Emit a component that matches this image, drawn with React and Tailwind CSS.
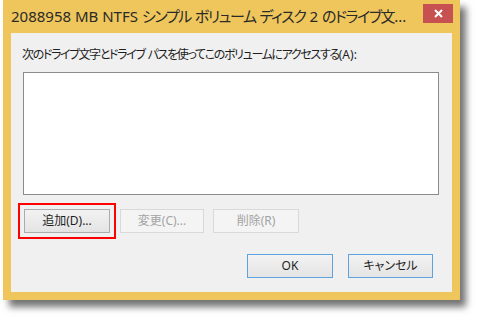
import React from "react";

const jp = "font-['Noto_Sans','Noto_Sans_CJK_JP',sans-serif] [font-feature-settings:'palt']";

const Btn = ({ children, disabled, primary, className = "" }) => (
  <div
    className={`h-[24px] flex items-center justify-center text-[12px] border ${
      disabled
        ? "border-[#d9d9d9] bg-[#f4f4f4] text-[#a3a3a3]"
        : primary
        ? "border-[#5fa2e0] bg-gradient-to-b from-[#f2f2f2] to-[#e4e4e4] text-[#1e1e1e]"
        : "border-[#acacac] bg-gradient-to-b from-[#f2f2f2] to-[#e4e4e4] text-[#1e1e1e]"
    } ${className}`}
  >
    {children}
  </div>
);

const App = () => {
  return (
    <div className={`w-[477px] h-[318px] bg-white pt-0 pl-[3px] ${jp}`}>
      <div className="w-[457px] h-[300px] bg-[#efc65c] flex flex-col shadow-[6px_7px_7px_rgba(0,0,0,0.55)]">
        <div className="h-[33px] flex items-start">
          <div className="flex-1 min-w-0 overflow-hidden pl-[8px] pt-[5px] text-[15px] leading-[22px] text-[#2a2a2a] whitespace-nowrap">
            2088958 MB NTFS <span className="tracking-[-1.4px]">シンプル</span>{" "}
            <span className="tracking-[-1.4px]">ボリューム</span>{" "}
            <span className="tracking-[-1.4px]">ディスク</span> 2{" "}
            <span className="tracking-[-1.4px]">のドライブ文</span>...
          </div>
          <div className="shrink-0 mr-[7px] mt-[4px] w-[30px] h-[19px] bg-[#c75050] flex items-center justify-center">
            <svg width="9" height="9" viewBox="0 0 9 9">
              <path d="M1 1L8 8M8 1L1 8" stroke="white" strokeWidth="2" />
            </svg>
          </div>
        </div>
        <div className="mx-[8px] h-[259px] bg-[#f0f0f0] flex flex-col">
          <div className="pl-[11px] pt-[14px] text-[12px] leading-[16px] text-[#1e1e1e] whitespace-nowrap">
            <span className="tracking-[-1.35px]">次のドライブ文字とドライブ</span>{" "}
            <span className="tracking-[-1.35px]">パスを使ってこのボリュームにアクセスする</span>(A):
          </div>
          <div className="ml-[12px] mt-[9px] w-[416px] h-[123px] bg-white border border-[#8b8b8b]" />
          <div className="flex mt-[14px] ml-[13px] gap-[10px]">
            <div className="relative">
              <Btn className="w-[86px]">追加(D)...</Btn>
              <div className="absolute -inset-[6px] border-2 border-[#ff0000]" />
            </div>
            <Btn disabled className="w-[84px]">変更(C)...</Btn>
            <Btn disabled className="w-[86px] ml-[-1px]">削除(R)</Btn>
          </div>
          <div className="flex mt-[21px] ml-[236px] gap-[15px]">
            <Btn primary className="w-[86px]">OK</Btn>
            <Btn primary className="w-[85px]">キャンセル</Btn>
          </div>
        </div>
      </div>
    </div>
  );
};

export default App;
